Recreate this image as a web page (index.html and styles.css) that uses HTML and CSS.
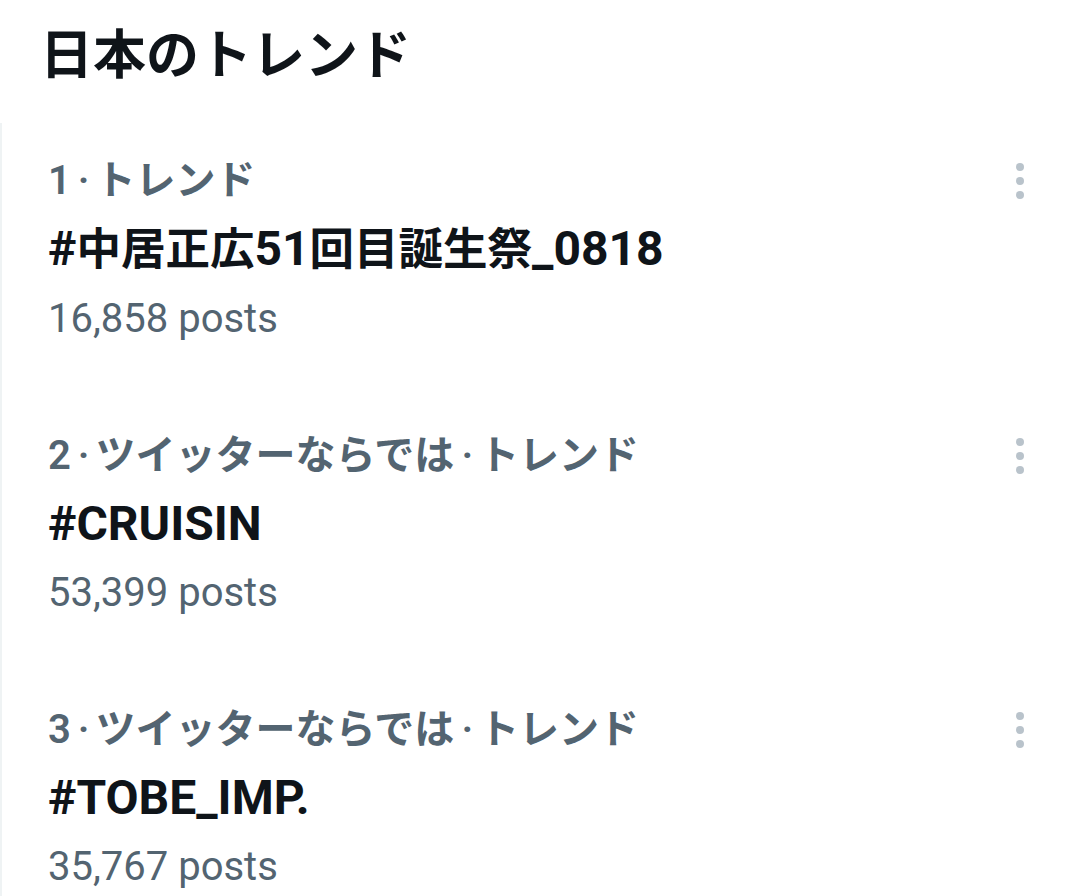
FILE: index.html
```html
<!DOCTYPE html>
<html lang="ja">
<head>
<meta charset="utf-8">
<title>日本のトレンド</title>
<link rel="stylesheet" href="styles.css">
</head>
<body>
<header class="page-head">
  <h1 class="page-title">日本のトレンド</h1>
</header>
<section class="trend-list">
  <article class="trend">
    <div class="trend-body">
      <div class="trend-context">1<span class="sep">·</span>トレンド</div>
      <div class="trend-name">#<span class="cj">中居正広</span>51<span class="cj">回目誕生祭</span>_0818</div>
      <div class="trend-count">16,858 posts</div>
    </div>
    <button class="trend-more" aria-label="More">
      <svg viewBox="0 0 8 36" width="8" height="36"><circle cx="4" cy="4" r="4"/><circle cx="4" cy="18" r="4"/><circle cx="4" cy="32" r="4"/></svg>
    </button>
  </article>
  <article class="trend">
    <div class="trend-body">
      <div class="trend-context">2<span class="sep">·</span>ツイッターならでは<span class="sep">·</span>トレンド</div>
      <div class="trend-name">#CRUISIN</div>
      <div class="trend-count">53,399 posts</div>
    </div>
    <button class="trend-more" aria-label="More">
      <svg viewBox="0 0 8 36" width="8" height="36"><circle cx="4" cy="4" r="4"/><circle cx="4" cy="18" r="4"/><circle cx="4" cy="32" r="4"/></svg>
    </button>
  </article>
  <article class="trend">
    <div class="trend-body">
      <div class="trend-context">3<span class="sep">·</span>ツイッターならでは<span class="sep">·</span>トレンド</div>
      <div class="trend-name">#TOBE_IMP.</div>
      <div class="trend-count">35,767 posts</div>
    </div>
    <button class="trend-more" aria-label="More">
      <svg viewBox="0 0 8 36" width="8" height="36"><circle cx="4" cy="4" r="4"/><circle cx="4" cy="18" r="4"/><circle cx="4" cy="32" r="4"/></svg>
    </button>
  </article>
</section>
</body>
</html>
```
FILE: styles.css
```css
html, body {
  margin: 0;
  padding: 0;
  background: #ffffff;
}
body {
  font-family: Roboto, "Noto Sans CJK JP", sans-serif;
  color: #0f1419;
  width: 1080px;
  height: 896px;
  overflow: hidden;
}
.page-head {
  padding: 0 0 0 40px;
  height: 123px;
  display: flex;
  align-items: flex-start;
}
.page-title {
  margin: 0;
  font-size: 53px;
  line-height: 112px;
  font-weight: 700;
  color: #0f1419;
}
.trend-list {
  border-left: 2px solid #eff3f4;
}
.trend {
  display: flex;
  align-items: flex-start;
  padding: 36px 40px 57px 46px;
}
.trend-body {
  flex: 1;
  display: flex;
  flex-direction: column;
}
.trend-context {
  font-size: 40px;
  line-height: 44px;
  font-weight: 600;
  color: #536471;
  white-space: nowrap;
}
.sep {
  padding: 0 6px 0 7px;
}
.trend-name {
  margin-top: 20px;
  font-size: 48px;
  line-height: 52px;
  font-weight: 700;
  color: #0f1419;
  white-space: nowrap;
}
.cj {
  font-size: 44.5px;
}
.trend-count {
  margin-top: 21px;
  font-size: 40px;
  line-height: 44px;
  font-weight: 400;
  color: #536471;
}
.trend-more {
  width: 40px;
  height: 44px;
  padding: 0;
  border: 0;
  background: none;
  display: flex;
  align-items: center;
  justify-content: center;
}
.trend-more svg {
  fill: #b9c3cb;
}
```
